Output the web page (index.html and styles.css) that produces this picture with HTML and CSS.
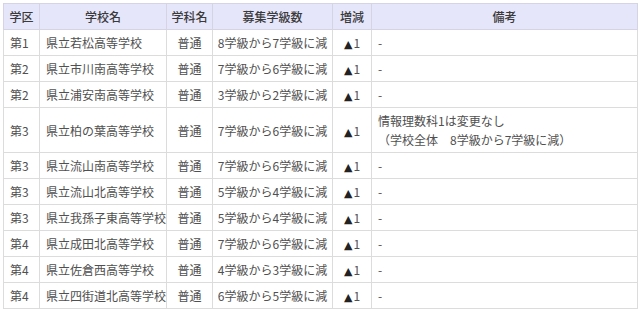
FILE: index.html
```html
<!DOCTYPE html>
<html lang="ja">
<head>
<meta charset="utf-8">
<link rel="stylesheet" href="styles.css">
</head>
<body>
<table class="tbl">
  <colgroup>
    <col class="c-ku"><col class="c-name"><col class="c-ka"><col class="c-num"><col class="c-diff"><col class="c-note">
  </colgroup>
  <thead>
    <tr><th>学区</th><th>学校名</th><th>学科名</th><th>募集学級数</th><th>増減</th><th>備考</th></tr>
  </thead>
  <tbody>
    <tr><td>第1</td><td>県立若松高等学校</td><td class="ctr">普通</td><td class="ctr">8学級から7学級に減</td><td class="ctr"><span class="tri">▲</span>1</td><td>-</td></tr>
    <tr><td>第2</td><td>県立市川南高等学校</td><td class="ctr">普通</td><td class="ctr">7学級から6学級に減</td><td class="ctr"><span class="tri">▲</span>1</td><td>-</td></tr>
    <tr><td>第2</td><td>県立浦安南高等学校</td><td class="ctr">普通</td><td class="ctr">3学級から2学級に減</td><td class="ctr"><span class="tri">▲</span>1</td><td>-</td></tr>
    <tr><td>第3</td><td>県立柏の葉高等学校</td><td class="ctr">普通</td><td class="ctr">7学級から6学級に減</td><td class="ctr"><span class="tri">▲</span>1</td><td>情報理数科1は変更なし<br>（学校全体　8学級から7学級に減）</td></tr>
    <tr><td>第3</td><td>県立流山南高等学校</td><td class="ctr">普通</td><td class="ctr">7学級から6学級に減</td><td class="ctr"><span class="tri">▲</span>1</td><td>-</td></tr>
    <tr><td>第3</td><td>県立流山北高等学校</td><td class="ctr">普通</td><td class="ctr">5学級から4学級に減</td><td class="ctr"><span class="tri">▲</span>1</td><td>-</td></tr>
    <tr><td>第3</td><td>県立我孫子東高等学校</td><td class="ctr">普通</td><td class="ctr">5学級から4学級に減</td><td class="ctr"><span class="tri">▲</span>1</td><td>-</td></tr>
    <tr><td>第4</td><td>県立成田北高等学校</td><td class="ctr">普通</td><td class="ctr">7学級から6学級に減</td><td class="ctr"><span class="tri">▲</span>1</td><td>-</td></tr>
    <tr><td>第4</td><td>県立佐倉西高等学校</td><td class="ctr">普通</td><td class="ctr">4学級から3学級に減</td><td class="ctr"><span class="tri">▲</span>1</td><td>-</td></tr>
    <tr><td>第4</td><td>県立四街道北高等学校</td><td class="ctr">普通</td><td class="ctr">6学級から5学級に減</td><td class="ctr"><span class="tri">▲</span>1</td><td>-</td></tr>
  </tbody>
</table>
</body>
</html>
```
FILE: styles.css
```css
html, body {
  margin: 0;
  padding: 0;
  background: #fff;
}
body {
  padding: 3px;
  font-family: "Noto Sans CJK JP", "Noto Sans", sans-serif;
  font-size: 12px;
  line-height: 19px;
  color: #505050;
}
.tbl {
  border-collapse: collapse;
  table-layout: fixed;
  width: 634px;
}
.c-ku { width: 36px; }
.c-name { width: 127px; }
.c-ka { width: 46px; }
.c-num { width: 120px; }
.c-diff { width: 39px; }
.c-note { width: 266px; }
.tbl th, .tbl td {
  border: 1px solid #dcdcdc;
  padding: 3px 6px;
  height: 19px;
  white-space: nowrap;
  overflow: visible;
}
.tbl th {
  background: #e6e6fa;
  font-weight: 500;
  color: #3a3a3a;
  text-align: center;
  padding: 3px 2px;
  border-color: #d4d4e4;
}
.tbl td {
  text-align: left;
}
.tbl td.ctr {
  text-align: center;
  padding-left: 1px;
  padding-right: 1px;
}
.tri {
  font-family: "DejaVu Sans", sans-serif;
  font-size: 11px;
  line-height: 1;
  color: #222;
  margin-right: 1px;
}
```
